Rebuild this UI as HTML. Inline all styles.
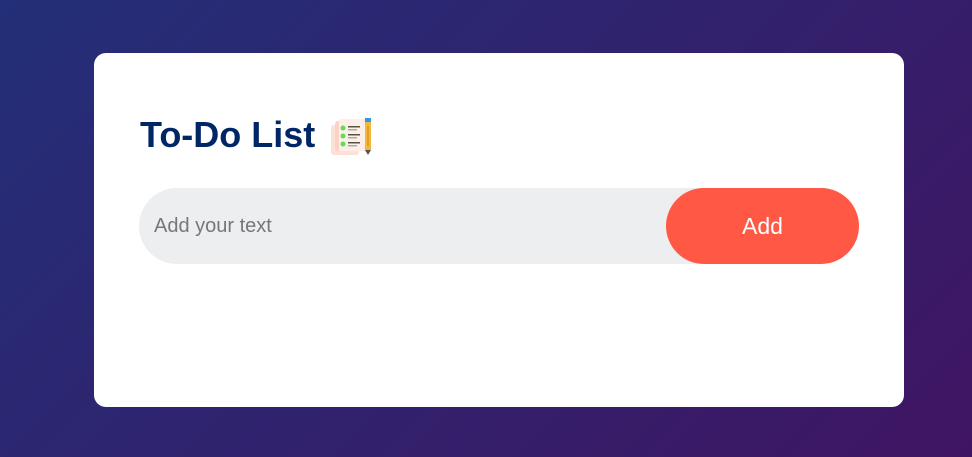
<!DOCTYPE html>
<html><head><meta charset="utf-8"><style>
html,body{margin:0;padding:0;width:972px;height:457px;overflow:hidden}
body{background:linear-gradient(135deg,#232f78,#3f1563);font-family:"Liberation Sans",sans-serif}
.card{position:absolute;left:94px;top:53px;width:810px;height:354px;background:#fff;border-radius:12px}
h2{position:absolute;left:46px;top:62px;margin:0;font-size:36px;font-weight:bold;color:#002765;line-height:40px;display:flex;align-items:center}
h2 svg{margin-left:14px;position:relative;top:2px}
.row{position:absolute;left:45px;top:135px;width:720px;height:76px;background:#edeef0;border-radius:38px}
.row span{position:absolute;left:15px;top:27px;font-size:20px;color:#777}
.btn{position:absolute;right:0;top:0;width:193px;height:76px;border-radius:38px;background:#ff5945;color:#fff;font-size:23px;text-align:center;line-height:76px}
</style></head><body>
<div class="card">
<h2>To-Do List
<svg width="45" height="40" viewBox="0 0 45 40">
<rect x="2" y="8" width="28" height="30" rx="3" fill="#fde0d6"/>
<rect x="6" y="4" width="28" height="30" rx="3" fill="#fbd2c6"/>
<rect x="10" y="2" width="28" height="32" rx="2" fill="#fdeee8"/>
<circle cx="14" cy="11" r="2.5" fill="#5be05b"/><rect x="19" y="9" width="12" height="1.5" fill="#554"/><rect x="19" y="12" width="9" height="1.5" fill="#aaa"/>
<circle cx="14" cy="19" r="2.5" fill="#5be05b"/><rect x="19" y="17" width="12" height="1.5" fill="#554"/><rect x="19" y="20" width="9" height="1.5" fill="#aaa"/>
<circle cx="14" cy="27" r="2.5" fill="#5be05b"/><rect x="19" y="25" width="12" height="1.5" fill="#554"/><rect x="19" y="28" width="9" height="1.5" fill="#aaa"/>
<rect x="36" y="1" width="6" height="4" fill="#2f9ae0"/>
<rect x="36" y="5" width="6" height="28" fill="#f5b73b"/>
<rect x="38.5" y="9" width="1" height="20" fill="#c98a1e"/>
<polygon points="36,33 42,33 39,38" fill="#555"/>
</svg></h2>
<div class="row"><span>Add your text</span><div class="btn">Add</div></div>
</div>
</body></html>
